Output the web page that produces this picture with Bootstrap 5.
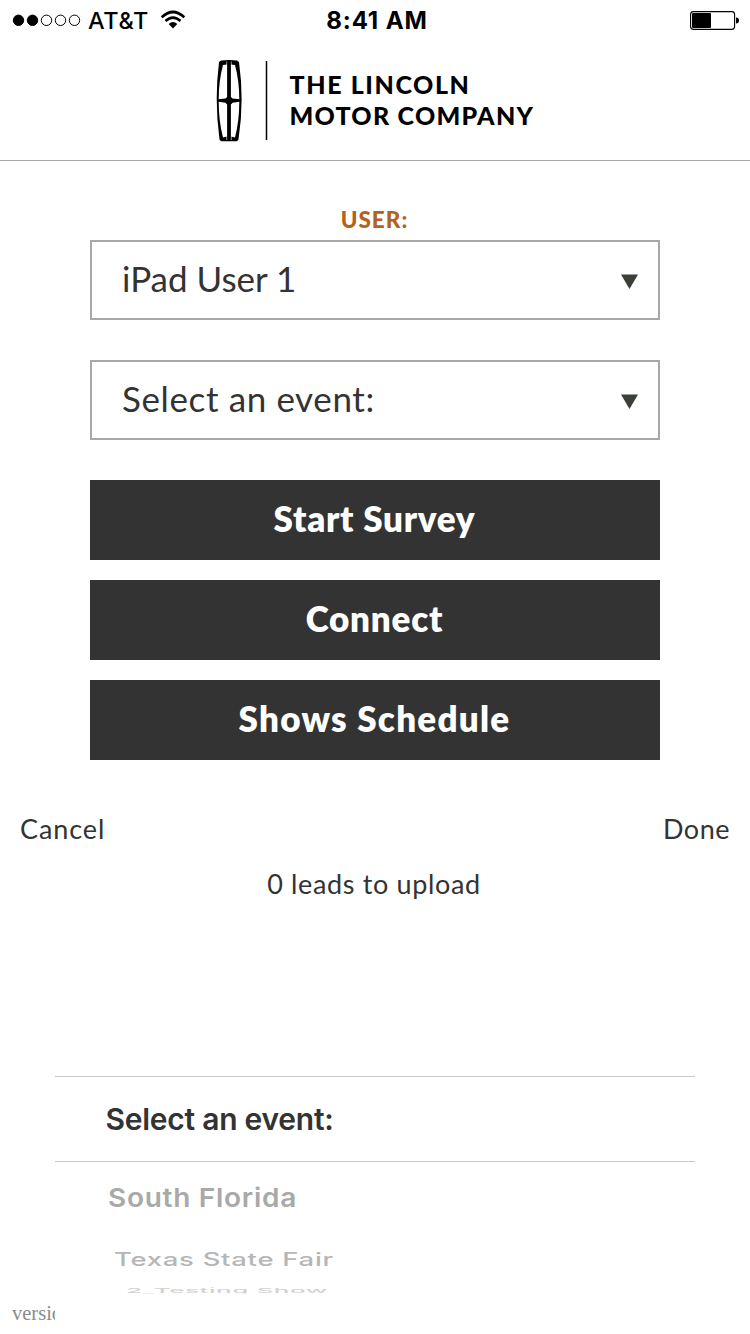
<!DOCTYPE html>
<html lang="en">
<head>
<meta charset="utf-8">
<meta name="viewport" content="width=device-width, initial-scale=1">
<title>The Lincoln Motor Company</title>
<link href="https://cdn.jsdelivr.net/npm/bootstrap@5.3.0/dist/css/bootstrap.min.css" rel="stylesheet">
<style>
body{font-family:Lato,"Open Sans",sans-serif;color:#333;width:750px;height:1334px;overflow:hidden;background:#fff}
.status{height:40px;padding:0 11px 0 12px;font-family:Inter,sans-serif;color:#000;font-size:23px;line-height:40px}
.status>div{flex:1 1 0}
.carrier{margin-left:7px;padding-top:2px;letter-spacing:.6px;font-size:23.5px;font-weight:500}
.wifi{margin-left:11px}
.status>.clock{flex:0 0 auto;padding:2px 0 0 3px;font-weight:700;letter-spacing:.9px;font-size:24px}
.brand-bar{height:121px;border-bottom:1px solid #a9a9a9;padding:19px 0 0 215px;color:#000}
.divider{margin-left:22px}
.brand-name{font-weight:900;font-size:25px;line-height:31.5px;margin:9.5px 0 0 21.5px}
.brand-name div{white-space:nowrap}
.n1{letter-spacing:1.6px}.n2{letter-spacing:1.25px}
.form-col{width:570px}
.user-label{height:79px;padding:43px 1px 0 0;line-height:32px;font-size:22.5px;letter-spacing:1px;font-weight:900;color:#b2611e}
.picker-field{height:80px;border:2px solid #a8a8a8;padding:0 19px 0 30px;font-size:35px;line-height:72px;background:#fff;color:#333}
.picker-field span{margin-top:-4px}
.picker-field svg{margin-top:2px}
.picker-field+.picker-field,.actions{margin-top:40px}
.f2{letter-spacing:.62px}
.actions{gap:20px}
.action{height:80px;border:0;border-radius:0;background:#333!important;color:#fff!important;font-size:35px;font-weight:800;line-height:76px;padding:0 1px 4px 0}
.b1{letter-spacing:.75px}.b2{letter-spacing:.8px}.b3{letter-spacing:1.25px}
.toolbar-row{height:50px;margin-top:44px;padding:0 20px;font-size:27px;line-height:50px}
.t1{letter-spacing:.9px}.t2{letter-spacing:.5px}
.leads{font-size:27px;letter-spacing:.65px;height:50px;line-height:50px;margin-top:5px;padding-right:2px}
.wheel{width:640px;margin:167px 0 0 55px;font-family:Inter,sans-serif}
.wheel-current{height:86px;border-top:1px solid #c8c8c8;border-bottom:1px solid #c8c8c8;padding-left:50.5px;font-size:30px;letter-spacing:-.25px;font-weight:600;line-height:85px}
.wheel-item{white-space:nowrap;transform-origin:0 50%;width:max-content}
.w1{height:40px;line-height:40px;margin:16px 0 0 53px;font-size:28px;letter-spacing:.72px;font-weight:600;color:#a9a9a9;transform:scaleY(.93)}
.w2{height:40px;line-height:40px;margin:21px 0 0 59px;font-size:27.5px;letter-spacing:.7px;font-weight:500;color:#b6b6b6;transform:scaleY(.66)}
.w3{height:26px;line-height:30px;margin:-2px 0 4px 71px;font-size:26px;letter-spacing:.55px;font-weight:500;color:#d2d2d2;overflow:hidden;transform:scaleY(.26)}
.version{margin:-9px 0 0 12px;width:43px;height:30px;line-height:30px;overflow:hidden;font-family:"Liberation Serif",serif;font-size:20.5px;color:#8b8b8b;white-space:nowrap}
</style>
</head>
<body>
<header>
  <div class="status d-flex align-items-center">
    <div class="d-flex align-items-center">
      <svg width="69" height="14" viewBox="0 0 69 14"><g stroke="#000" stroke-width="1"><circle cx="6.5" cy="7.3" r="5.2"/><circle cx="20.5" cy="7.3" r="5.2"/><g fill="none"><circle cx="34.5" cy="7.3" r="5.2"/><circle cx="48.5" cy="7.3" r="5.2"/><circle cx="62.5" cy="7.3" r="5.2"/></g></g></svg>
      <span class="carrier">AT&amp;T</span>
      <svg class="wifi" width="26" height="20" viewBox="0 0 26 20" fill="none" stroke="#000"><path d="M1.7 7.2Q13 -3.2 24.3 7.2" stroke-width="2.7"/><path d="M5.5 11.1Q13 4 20.5 11.1" stroke-width="2.7"/><path d="M8.7 14Q13 10.1 17.3 14L13 18.5Z" fill="#000" stroke="none"/></svg>
    </div>
    <div class="clock text-nowrap">8:41 AM</div>
    <div class="d-flex justify-content-end">
      <svg width="49" height="19" viewBox="0 0 49 19"><rect x=".6" y=".6" width="44" height="17.8" rx="2.8" fill="none" stroke="#000" stroke-width="1.1"/><rect x="2" y="2" width="19" height="15" rx="1"/><path d="M46 6.5q3 0 3 3t-3 3z"/></svg>
    </div>
  </div>
  <div class="brand-bar d-flex">
    <svg width="28" height="84" viewBox="0 0 28 84"><path fill-rule="evenodd" d="M6 1.5Q14 .3 22 1.5L24 3Q29.5 42 23.5 80.5L22 82.2H6L4.5 80.5Q-.8 42 4 3ZM8 6Q3.700 22 3.700 40.300L10.500 39.500 12 38V5.500ZM16 5.500V38L17.500 39.500 24.300 40.300Q24.300 22 20 6ZM3.700 42.700Q3.700 62 8 78.500L12 77.500V45.500L10.500 43.700ZM17.500 43.700 16 45.500V77.500L20 78.500Q24.300 62 24.300 42.700Z"/><path d="M11.700 2.500V38M16.300 2.500V38M11.700 45V81M16.300 45V81" stroke="#fff" stroke-width=".6"/><path d="M14 30 15.500 39.500 23 41.500 15.500 43.500 14 53 12.500 43.500 5 41.500 12.500 39.500Z"/></svg>
    <svg class="divider" width="3" height="84"><path d="M1.5 2V81" stroke="#000" stroke-width="1.5"/></svg>
    <div class="brand-name"><div class="n1">THE LINCOLN</div><div class="n2">MOTOR COMPANY</div></div>
  </div>
</header>
<main>
  <div class="form-col mx-auto">
    <div class="user-label text-center">USER:</div>
    <div class="picker-field d-flex justify-content-between align-items-center"><span>iPad User 1</span><svg width="19" height="18"><path d="M1 2.5H18L9.500 17Z" fill="#3a3f38"/></svg></div>
    <div class="picker-field d-flex justify-content-between align-items-center"><span class="f2">Select an event:</span><svg width="19" height="18"><path d="M1 2.5H18L9.500 17Z" fill="#3a3f38"/></svg></div>
    <div class="actions d-grid">
      <button class="btn action"><span class="b1">Start Survey</span></button>
      <button class="btn action"><span class="b2">Connect</span></button>
      <button class="btn action"><span class="b3">Shows Schedule</span></button>
    </div>
  </div>
  <div class="toolbar-row d-flex justify-content-between"><span class="t1">Cancel</span><span class="t2">Done</span></div>
  <div class="leads text-center">0 leads to upload</div>
  <div class="wheel">
    <div class="wheel-current">Select an event:</div>
    <div class="wheel-item w1">South Florida</div>
    <div class="wheel-item w2">Texas State Fair</div>
    <div class="wheel-item w3">2_Testing Show</div>
  </div>
  <div class="version">version</div>
</main>
<script src="https://cdn.jsdelivr.net/npm/bootstrap@5.3.0/dist/js/bootstrap.bundle.min.js"></script>
</body>
</html>
